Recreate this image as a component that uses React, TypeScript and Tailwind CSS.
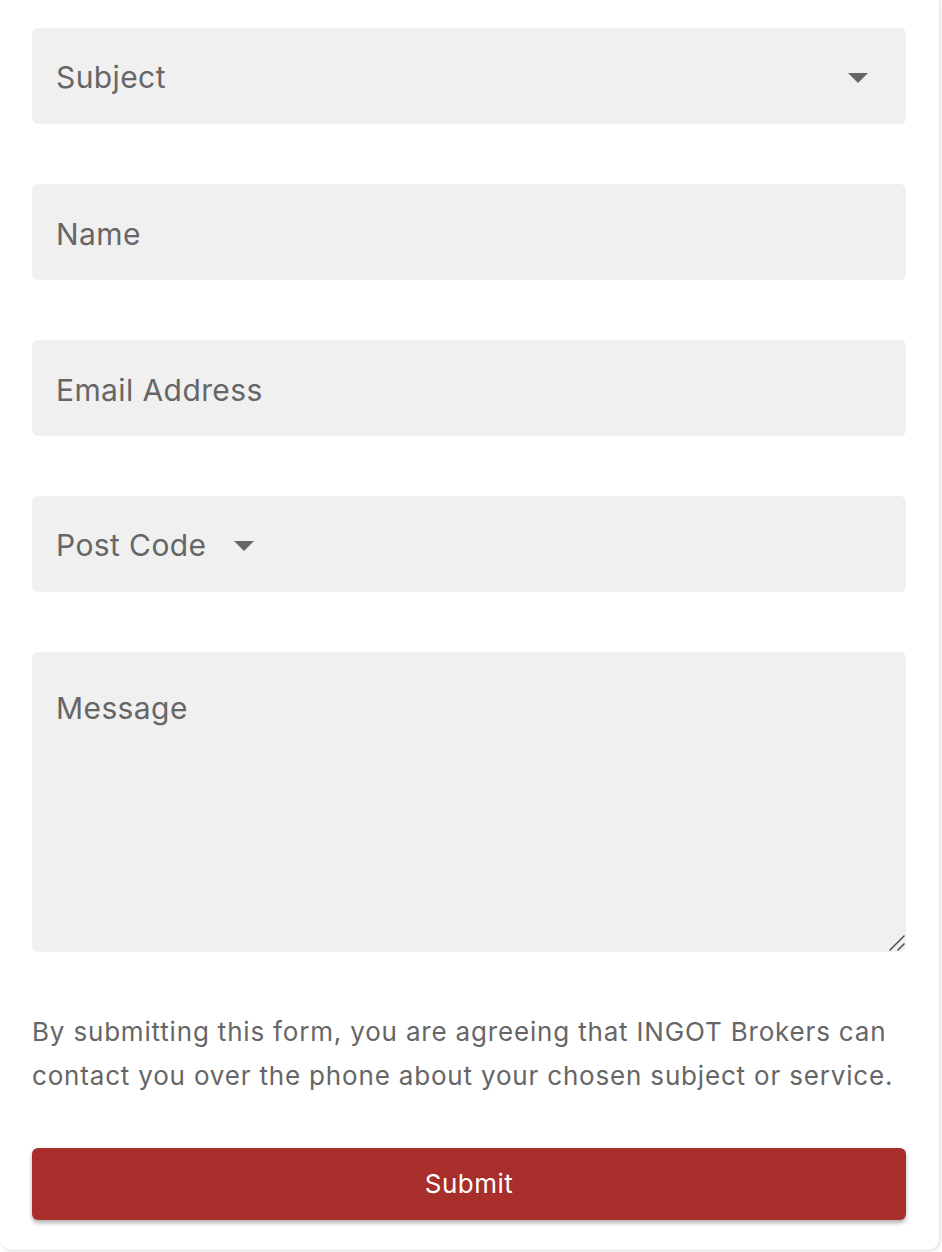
import React from "react";

const Caret = () => (
  <svg width="20" height="10" viewBox="0 0 20 10" className="shrink-0">
    <path d="M0 0 H20 L10 10 Z" fill="#666666" />
  </svg>
);

const fieldBox =
  "w-full h-[96px] rounded-[6px] bg-[#f0f0f0] px-6 pt-[3px] flex items-center text-[30px] tracking-[0.4px] text-[#666666]";

export default function App() {
  return (
    <div className="w-[942px] min-h-[1252px] bg-white" style={{ fontFamily: "Inter, 'Noto Sans', sans-serif" }}>
      <div className="w-[940px] h-[1251px] bg-white rounded-b-[12px] border-r border-b border-[#e6e6e6] shadow-[1px_1px_3px_rgba(0,0,0,0.08)] pl-8 pr-[33px] pt-7 flex flex-col">
        <div className="flex flex-col gap-[60px]">
          <div className={fieldBox + " justify-between pr-[38px]"}>
            <span>Subject</span>
            <Caret />
          </div>
          <input
            className={fieldBox + " outline-none placeholder:text-[#666666]"}
            placeholder="Name"
          />
          <input
            className={fieldBox + " outline-none placeholder:text-[#666666]"}
            placeholder="Email Address"
          />
          <div className={fieldBox + " gap-[28px]"}>
            <span>Post Code</span>
            <Caret />
          </div>
          <div className="relative">
            <textarea
              className="block w-full h-[300px] resize-none rounded-[6px] bg-[#f0f0f0] px-6 pt-[34px] text-[30px] tracking-[0.4px] text-[#666666] outline-none placeholder:text-[#666666]"
              placeholder="Message"
            />
            {/* resize grip */}
            <svg width="16" height="16" viewBox="0 0 16 16" className="absolute right-[1px] bottom-[1px]">
              <path d="M1 15 L15 1 M9 15 L15 9" stroke="#555555" strokeWidth="1.6" strokeLinecap="round" />
            </svg>
          </div>
        </div>
        <p className="mt-[58px] text-[26px] tracking-[0.82px] leading-[44px] text-[#666666]">
          By submitting this form, you are agreeing that INGOT Brokers can contact you over the phone about your chosen subject or service.
        </p>
        <button className="mt-[50px] w-full h-[72px] rounded-[6px] bg-[#a82e2b] pb-[2px] text-white text-[26px] tracking-[0.5px] shadow-[0_3px_4px_rgba(0,0,0,0.3)]">
          Submit
        </button>
      </div>
    </div>
  );
}
